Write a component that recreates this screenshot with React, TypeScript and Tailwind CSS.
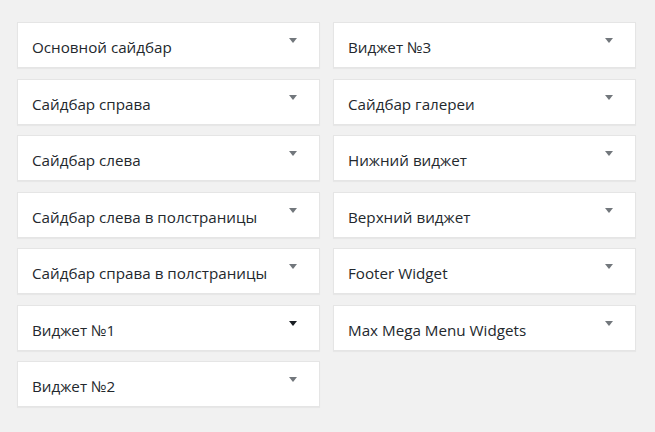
const left = [
  "Основной сайдбар",
  "Сайдбар справа",
  "Сайдбар слева",
  "Сайдбар слева в полстраницы",
  "Сайдбар справа в полстраницы",
  "Виджет №1",
  "Виджет №2",
];

const right = [
  "Виджет №3",
  "Сайдбар галереи",
  "Нижний виджет",
  "Верхний виджет",
  "Footer Widget",
  "Max Mega Menu Widgets",
];

export default function App() {
  return (
    <div className="h-[432px] w-[655px] overflow-hidden bg-[#f1f1f1] font-['Open_Sans',sans-serif]">
      <div className="flex gap-[13px] pl-[17px] pr-[19px] pt-[22px]">
        <Column items={left} active="Виджет №1" />
        <Column items={right} />
      </div>
    </div>
  );
}

function Column({ items, active }: { items: string[]; active?: string }) {
  return (
    <div className="flex w-[304px] flex-col gap-[10.5px]">
      {items.map((name) => (
        <SidebarBox key={name} title={name} active={name === active} />
      ))}
    </div>
  );
}

function SidebarBox({ title, active }: { title: string; active: boolean }) {
  return (
    <div className="flex h-[46px] items-start justify-between border border-[#e5e5e5] bg-white pl-[14px] pr-[22px] shadow-[0_1px_1px_rgba(0,0,0,0.04)]">
      <h2 className="pt-[14px] text-[15.2px] leading-[20px] text-[#23282d]">{title}</h2>
      <span
        className={`mt-[15px] h-0 w-0 border-x-[4px] border-t-[5px] border-x-transparent ${
          active ? "border-t-[#191e23]" : "border-t-[#72777c]"
        }`}
      />
    </div>
  );
}
